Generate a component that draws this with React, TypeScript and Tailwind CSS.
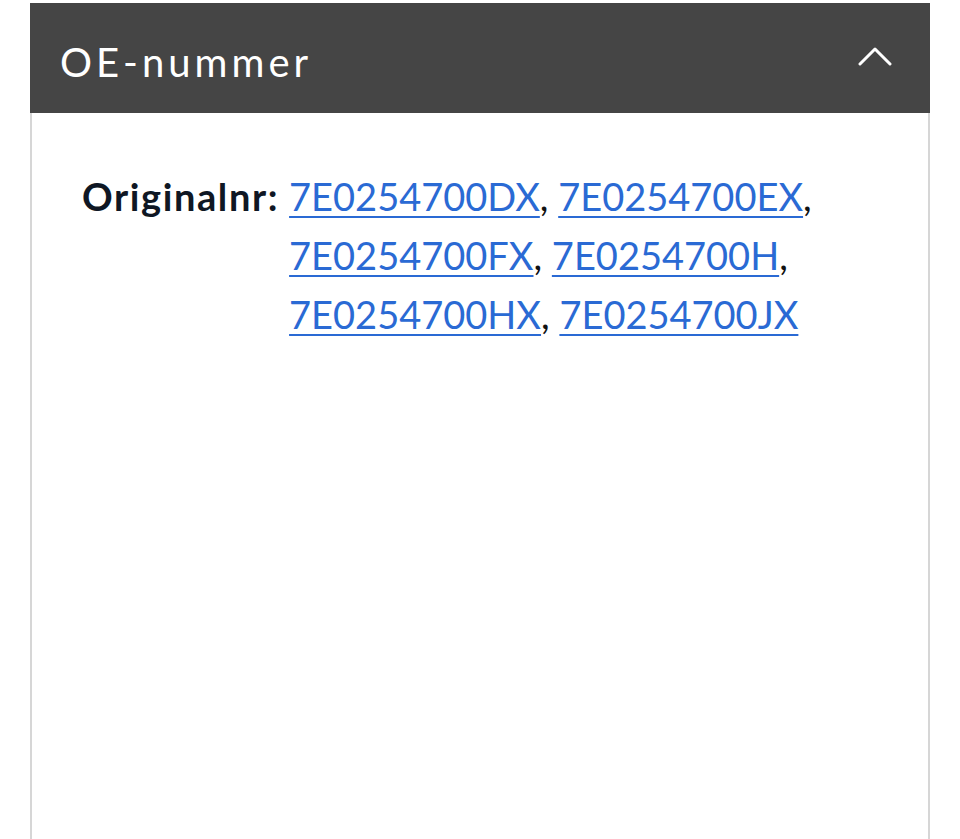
const LINKS = [
  ['7E0254700DX', '7E0254700EX'],
  ['7E0254700FX', '7E0254700H'],
  ['7E0254700HX', '7E0254700JX'],
];

export default function App() {
  return (
    <div className="min-h-[839px] bg-white pt-[3px] font-['Lato',sans-serif]">
      <div className="mx-[30px] min-h-[836px] border-x-2 border-[#d6d6d6]">
        <div className="-mx-[2px] flex h-[110px] items-center justify-between bg-[#454545] pl-[30px] pr-[38px]">
          <h2 className="pt-[8px] text-[40px] font-normal tracking-[4px] text-white">OE-nummer</h2>
          <svg width="34" height="20" viewBox="0 0 34 20" fill="none" className="mb-[4px]">
            <path d="M2 18 L17 3 L32 18" stroke="white" strokeWidth="3" strokeLinecap="round" strokeLinejoin="round" />
          </svg>
        </div>
        <div className="flex pl-[50px] pt-[54px] text-[38px] leading-[59px]">
          <span className="mr-[10px] font-bold tracking-[1.6px] text-[#0f1724]">Originalnr:</span>
          <div className="flex flex-col">
            {LINKS.map((row, i) => (
              <div key={i} className="whitespace-nowrap text-[#111]">
                <a href="#" className="text-[#2a6ad4] underline decoration-2 underline-offset-[5px]">{row[0]}</a>
                <span>, </span>
                <a href="#" className="text-[#2a6ad4] underline decoration-2 underline-offset-[5px]">{row[1]}</a>
                {i < LINKS.length - 1 && <span>,</span>}
              </div>
            ))}
          </div>
        </div>
      </div>
    </div>
  );
}
